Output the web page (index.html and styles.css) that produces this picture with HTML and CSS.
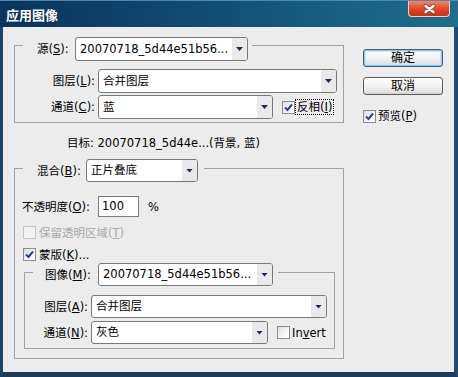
FILE: index.html
```html
<!DOCTYPE html>
<html lang="zh-CN">
<head>
<meta charset="utf-8">
<title>应用图像</title>
<link rel="stylesheet" href="styles.css">
</head>
<body>
<div class="window">
  <div class="titlebar">
    <span class="title">应用图像</span>
    <span class="close">
      <svg width="13" height="10" viewBox="0 0 13 10"><path d="M2.5 2 L10.5 8 M10.5 2 L2.5 8" stroke="#7a4a40" stroke-width="3.8" stroke-linecap="round"/><path d="M2.5 2 L10.5 8 M10.5 2 L2.5 8" stroke="#ffffff" stroke-width="2.2" stroke-linecap="round"/></svg>
    </span>
  </div>
  <div class="body">
    <div class="main">
      <div class="group g-source">
        <div class="legend lg-source">
          <span class="lbl">源(<u>S</u>):</span>
          <div class="combo c-source"><span class="val">20070718_5d44e51b56...</span><span class="arrow"></span></div>
        </div>
        <div class="rows rows-source">
          <span class="rlbl">图层(<u>L</u>):</span>
          <div class="combo c-layer"><span class="val">合并图层</span><span class="arrow"></span></div>
          <span class="rlbl">通道(<u>C</u>):</span>
          <div class="ctl">
            <div class="combo c-chan"><span class="val">蓝</span><span class="arrow"></span></div>
            <span class="check c-invert1"><span class="box checked"><svg width="11" height="11" viewBox="0 0 11 11"><path d="M2 5.5 L4.5 8 L9 2.5" fill="none" stroke="#2a3f96" stroke-width="2"/></svg></span><span class="focus">反相(<u>I</u>)</span></span>
          </div>
        </div>
      </div>

      <div class="target">目标:&nbsp;20070718_5d44e...(背景, 蓝)</div>

      <div class="group g-blend">
        <div class="legend lg-blend">
          <span class="lbl">混合(<u>B</u>):</span>
          <div class="combo c-blend"><span class="val">正片叠底</span><span class="arrow"></span></div>
        </div>
        <div class="opacity-row">
          <span class="olbl">不透明度(<u>O</u>):</span>
          <span class="input">100</span>
          <span class="pct">%</span>
        </div>
        <div class="check-row disabled r-preserve">
          <span class="box"></span><span>保留透明区域(<u>T</u>)</span>
        </div>
        <div class="check-row r-mask">
          <span class="box checked"><svg width="11" height="11" viewBox="0 0 11 11"><path d="M2 5.5 L4.5 8 L9 2.5" fill="none" stroke="#2a3f96" stroke-width="2"/></svg></span><span>蒙版(<u>K</u>)...</span>
        </div>

        <div class="group g-mask">
          <div class="legend lg-mask">
            <span class="lbl">图像(<u>M</u>):</span>
            <div class="combo c-image"><span class="val">20070718_5d44e51b56...</span><span class="arrow"></span></div>
          </div>
          <div class="rows rows-mask">
            <span class="rlbl">图层(<u>A</u>):</span>
            <div class="combo c-layer2"><span class="val">合并图层</span><span class="arrow"></span></div>
            <span class="rlbl">通道(<u>N</u>):</span>
            <div class="ctl">
              <div class="combo c-chan2"><span class="val">灰色</span><span class="arrow"></span></div>
              <span class="check c-invert2"><span class="box"></span><span>In<u>v</u>ert</span></span>
            </div>
          </div>
        </div>
      </div>
    </div>

    <div class="side">
      <button class="btn default">确定</button>
      <button class="btn">取消</button>
      <span class="check preview"><span class="box checked"><svg width="11" height="11" viewBox="0 0 11 11"><path d="M2 5.5 L4.5 8 L9 2.5" fill="none" stroke="#2a3f96" stroke-width="2"/></svg></span><span>预览(<u>P</u>)</span></span>
    </div>
  </div>
</div>
</body>
</html>
```
FILE: styles.css
```css
html, body {
  margin: 0;
  padding: 0;
}
body {
  width: 458px;
  height: 377px;
  overflow: hidden;
  background: #d8d8d8;
  font-family: "DejaVu Sans", "Noto Sans CJK SC", sans-serif;
  font-size: 11.5px;
  line-height: 14px;
  color: #000;
}
u {
  text-decoration: underline;
  text-underline-offset: 1px;
}

.window {
  width: 458px;
  height: 377px;
  display: flex;
  flex-direction: column;
}

/* title bar */
.titlebar {
  height: 27px;
  flex: none;
  box-sizing: border-box;
  display: flex;
  align-items: flex-start;
  justify-content: space-between;
  padding: 0 8px 0 6px;
  border-top: 1px solid #4f88ad;
  background: linear-gradient(90deg, #0a345c 0%, #0f4670 35%, #175d82 70%, #1f6e8d 100%);
}
.title {
  margin-top: 7px;
  font-family: "Noto Sans CJK SC", sans-serif;
  font-weight: bold;
  font-size: 13px;
  line-height: 13px;
  color: #fff;
  text-shadow: 1px 1px 0 #082a48;
}
.close {
  width: 42px;
  height: 16px;
  box-sizing: border-box;
  display: flex;
  align-items: center;
  justify-content: center;
  border: 1px solid #e9d2c8;
  border-top: none;
  border-radius: 0 0 4px 4px;
  background: linear-gradient(#f3866a 0%, #e6502f 45%, #d23c1e 75%, #c9351a 100%);
}

/* body */
.body {
  flex: 1;
  min-height: 0;
  box-sizing: border-box;
  display: flex;
  column-gap: 19px;
  padding: 10px 0 0 11px;
  background: #ececec;
  border-left: 3px solid #1a4568;
  border-right: 4px solid #1e4d70;
  border-bottom: 5px solid #1d3c57;
}
.main {
  width: 330px;
  flex: none;
}

/* group boxes */
.group {
  border: 1px solid #a2a2a2;
}
.legend {
  display: flex;
  align-items: center;
  width: max-content;
  background: #ececec;
}
.lbl {
  flex: none;
}

.g-source {
  margin-top: 8px;
  padding-bottom: 3px;
}
.lg-source {
  margin: -9px 0 0 8px;
  padding: 0 4px 0 14px;
}
.lg-source .lbl { width: 38px; }

.rows {
  display: grid;
  align-items: center;
}
.rows-source {
  margin-top: 8px;
  grid-template-columns: 80px auto;
  column-gap: 3px;
  row-gap: 2px;
}
.rows-mask {
  margin-top: 9px;
  grid-template-columns: 63px auto;
  column-gap: 3px;
  row-gap: 3px;
}
.rlbl {
  text-align: right;
  white-space: nowrap;
}
.ctl {
  display: flex;
  align-items: center;
}

/* combo boxes */
.combo {
  display: flex;
  box-sizing: border-box;
  height: 24px;
  border: 1px solid #787878;
  border-radius: 3px;
  background: #fff;
  overflow: hidden;
  flex: none;
}
.combo .val {
  flex: 1;
  padding-left: 4px;
  line-height: 22px;
  white-space: nowrap;
  overflow: hidden;
}
.combo .arrow {
  width: 15px;
  flex: none;
  display: flex;
  align-items: center;
  justify-content: center;
  background: #e9e9e9;
}
.combo .arrow::after {
  content: "";
  width: 7px;
  height: 4px;
  background: #1b2a5c;
  clip-path: polygon(0 0, 100% 0, 50% 100%);
}
.c-source { width: 173px; }
.c-layer { width: 239px; }
.c-chan { width: 175px; }
.c-blend { width: 112px; height: 23px; }
.c-image { width: 175px; height: 23px; }
.c-layer2 { width: 236px; height: 23px; }
.c-chan2 { width: 177px; height: 23px; }
.c-blend .val, .c-image .val, .c-layer2 .val, .c-chan2 .val { line-height: 21px; }

/* checkboxes */
.check {
  display: flex;
  align-items: center;
}
.box {
  width: 13px;
  height: 13px;
  box-sizing: border-box;
  flex: none;
  display: flex;
  align-items: center;
  justify-content: center;
  border: 1px solid #8c8c8c;
  background: linear-gradient(135deg, #dedede 0%, #f6f6f6 60%, #fff 100%);
}
.c-invert1 { margin-left: 9px; column-gap: 1px; }
.c-invert1 .focus {
  outline: 1px dotted #000;
  outline-offset: 0;
  padding: 0 1px;
}
.c-invert2 { margin-left: 9px; column-gap: 2px; }

/* target */
.target {
  margin-top: 12px;
  height: 16px;
  line-height: 16px;
  padding-left: 53px;
  white-space: nowrap;
}

/* blend group */
.g-blend {
  margin-top: 17px;
  padding-bottom: 9px;
}
.lg-blend {
  margin: -10px 0 0 8px;
  padding: 0 6px 0 14px;
}
.lg-blend .lbl { width: 49px; }

.opacity-row {
  display: flex;
  align-items: center;
  height: 21px;
  margin: 14px 0 0 7px;
}
.olbl {
  width: 73px;
  margin-right: 3px;
  white-space: nowrap;
}
.input {
  width: 41px;
  height: 21px;
  box-sizing: border-box;
  border: 1px solid #7b7b7b;
  background: #fff;
  padding-left: 3px;
  line-height: 19px;
}
.pct {
  margin-left: 9px;
}

.check-row {
  display: flex;
  align-items: center;
  height: 13px;
  margin-left: 8px;
  column-gap: 3px;
}
.r-preserve { margin-top: 9px; }
.r-mask { margin-top: 9px; }
.check-row.disabled {
  color: #a8a8a8;
}
.check-row.disabled .box {
  border-color: #c4c4c4;
  background: #f2f2f2;
}

.g-mask {
  margin: 11px 8px 0 9px;
  padding-bottom: 4px;
}
.lg-mask {
  margin: -10px 0 0 8px;
  padding: 0 5px 0 12px;
}
.lg-mask .lbl { width: 53px; }

/* side buttons */
.side {
  width: 80px;
  flex: none;
  display: flex;
  flex-direction: column;
  padding-top: 12px;
}
.btn {
  width: 80px;
  height: 18px;
  box-sizing: border-box;
  padding: 0;
  border: 1px solid #5c5c5c;
  border-radius: 3px;
  background: linear-gradient(#ffffff 0%, #f2f2f2 50%, #e2e2e2 85%, #d2d2d2 100%);
  font: inherit;
  font-size: 12px;
  line-height: 16px;
  color: #000;
}
.btn + .btn {
  margin-top: 10px;
}
.btn.default {
  border-color: #4a5a6a;
  box-shadow: inset 0 0 0 1px #8fc8ee, inset 0 0 0 2px #c6e4f8;
}
.preview {
  margin-top: 14px;
  column-gap: 2px;
}
```
